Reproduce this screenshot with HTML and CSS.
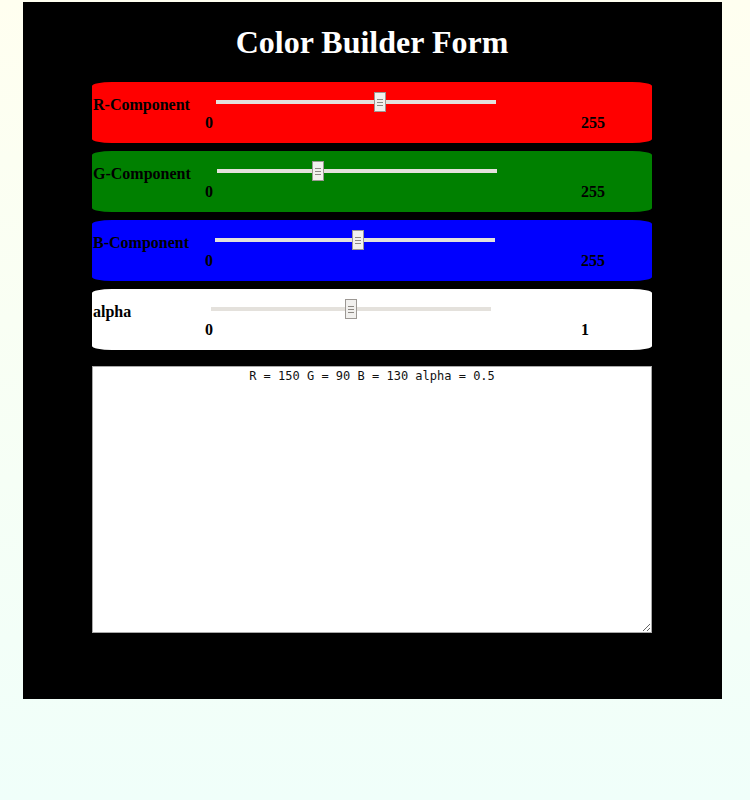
FILE: index.html
```html
<!DOCTYPE html>
<html lang="en">
<head>
    <meta charset="UTF-8">
    <meta name="viewport" content="width=device-width, initial-scale=1.0">
    <title>Color Builder Form</title>
    <link rel="stylesheet" href="styles.css">
</head>
<body>
    <div class="container">
        <h1>Color Builder Form</h1>

        <div class="panel panel-r">
            <div class="row">
                <label for="red">R-Component</label>
                <input type="range" id="red" min="0" max="255" value="150">
            </div>
            <div class="scale"><span class="min">0</span><span>255</span></div>
        </div>

        <div class="panel panel-g">
            <div class="row">
                <label for="green">G-Component</label>
                <input type="range" id="green" min="0" max="255" value="90">
            </div>
            <div class="scale"><span class="min">0</span><span>255</span></div>
        </div>

        <div class="panel panel-b">
            <div class="row">
                <label for="blue">B-Component</label>
                <input type="range" id="blue" min="0" max="255" value="130">
            </div>
            <div class="scale"><span class="min">0</span><span>255</span></div>
        </div>

        <div class="panel panel-a">
            <div class="row">
                <label for="alpha">alpha</label>
                <input type="range" id="alpha" min="0" max="1" step="0.1" value="0.5">
            </div>
            <div class="scale"><span class="min">0</span><span>1</span></div>
        </div>

        <textarea id="output">R = 150 G = 90 B = 130 alpha = 0.5</textarea>
    </div>
</body>
</html>
```

FILE: styles.css
```css
html {
    min-height: 100%;
    background: linear-gradient(to bottom, #fffff0, #f0fffa);
}
body {
    margin: 0;
    font-family: "Liberation Serif", "Times New Roman", serif;
}
.container {
    width: 699px;
    height: 697px;
    margin: 2px 0 0 23px;
    padding: 22px 0 0 69px;
    box-sizing: border-box;
    background: #000;
}
h1 {
    width: 560px;
    margin: 0 0 22px;
    font-size: 32px;
    line-height: 36px;
    color: #fff;
    text-align: center;
}
.panel {
    width: 560px;
    margin: 0 0 8px;
    padding: 10px 0 11px 1px;
    box-sizing: border-box;
    border-radius: 20px / 4px;
    font-size: 16px;
    font-weight: bold;
    line-height: 18px;
    color: #000;
}
.panel-r { background: #ff0000; }
.panel-g { background: #008000; }
.panel-b { background: #0000ff; }
.panel-a { background: #fff; }
.row {
    display: flex;
    align-items: flex-start;
    height: 22px;
}
.row label {
    margin-top: 4px;
    flex: none;
}
.panel-r label { width: 123px; }
.panel-g label { width: 124px; }
.panel-b label { width: 122px; }
.panel-a label { width: 118px; }
.scale {
    display: flex;
    padding-left: 112px;
}
.scale .min {
    width: 376px;
}
input[type=range] {
    -webkit-appearance: none;
    appearance: none;
    width: 280px;
    height: 20px;
    margin: 0;
    background: transparent;
}
input[type=range]::-webkit-slider-runnable-track {
    height: 4px;
    background: #e4e1dc;
}
input[type=range]::-webkit-slider-thumb {
    -webkit-appearance: none;
    box-sizing: border-box;
    width: 12px;
    height: 20px;
    margin-top: -8px;
    border: 1px solid #9c9894;
    background-color: #f1f0ee;
    background-image: repeating-linear-gradient(#8c8883 0 1px, transparent 1px 3px);
    background-size: 6px 7px;
    background-position: center;
    background-repeat: no-repeat;
}
textarea {
    display: block;
    width: 560px;
    height: 267px;
    margin: 16px 0 0;
    padding: 2px;
    box-sizing: border-box;
    border: 1px solid #a9a9a9;
    font-family: "DejaVu Sans Mono", monospace;
    font-size: 12px;
    color: #111;
    text-align: center;
    background: #fff;
}
```
